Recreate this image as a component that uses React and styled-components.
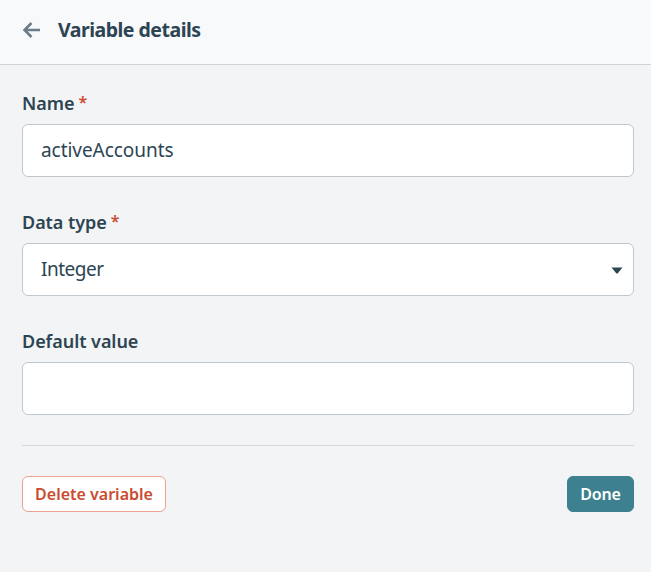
import styled, { createGlobalStyle } from 'styled-components';

const GlobalStyle = createGlobalStyle`
  html, body {
    margin: 0;
    padding: 0;
    background: #f3f4f6;
  }
  * {
    box-sizing: border-box;
  }
`;

const Page = styled.div`
  width: 651px;
  height: 572px;
  overflow: hidden;
  background: #f3f4f6;
  color: #2d4452;
  font-family: "Noto Sans", "Open Sans", sans-serif;
`;

const Header = styled.header`
  height: 65px;
  display: flex;
  align-items: center;
  gap: 17px;
  padding: 0 22px 5px;
  background: #f8f9fb;
  border-bottom: 1px solid #d0d3d7;
`;

const BackButton = styled.button`
  display: flex;
  padding: 0;
  border: 0;
  background: none;
  color: #6b7c89;
  cursor: pointer;
`;

const Title = styled.h1`
  margin: 0;
  font-size: 19.5px;
  line-height: 24px;
  font-weight: 700;
  letter-spacing: -0.5px;
`;

const Form = styled.form`
  padding: 25px 17px 0 22px;
`;

const Field = styled.div`
  margin-bottom: 32px;
`;

const Label = styled.label`
  display: block;
  height: 34px;
  font-size: 18px;
  line-height: 26px;
  font-weight: 600;
  letter-spacing: -0.05px;
`;

const Required = styled.span`
  position: relative;
  top: -2px;
  margin-left: 4px;
  color: #cb4b30;
  font-size: 16px;
`;

const InputWrap = styled.div`
  position: relative;
`;

const Input = styled.input`
  display: block;
  width: 100%;
  height: 53px;
  padding: 0 18px 2px;
  background: #fff;
  border: 1px solid #c0c7cd;
  border-radius: 6px;
  color: #2d4452;
  font-family: inherit;
  font-size: 19px;
  letter-spacing: ${(p) => (p.$tight ? '-0.5px' : '-0.05px')};
  outline: none;
`;

const Caret = styled.svg`
  position: absolute;
  top: 24px;
  right: 11px;
  width: 12px;
  height: 7px;
  color: #2d4452;
`;

const Divider = styled.hr`
  margin: -2px 0 30px;
  border: 0;
  border-top: 1px solid #d4d6d9;
`;

const Actions = styled.div`
  display: flex;
  justify-content: space-between;
`;

const Button = styled.button`
  height: 36px;
  width: ${(p) => (p.$danger ? '144px' : '67px')};
  padding: 0;
  border: 1px solid ${(p) => (p.$danger ? '#e9a393' : '#3d808f')};
  border-radius: 6px;
  background: ${(p) => (p.$danger ? '#fff' : '#3d808f')};
  color: ${(p) => (p.$danger ? '#cb4b30' : '#fff')};
  font-family: inherit;
  font-size: 16px;
  font-weight: 600;
  letter-spacing: ${(p) => (p.$danger ? '0' : '-0.2px')};
  cursor: pointer;
`;

export default function App() {
  return (
    <Page>
      <GlobalStyle />
      <Header>
        <BackButton type="button" aria-label="Back">
          <svg width="19" height="18" viewBox="0 0 19 18" fill="none" stroke="currentColor" strokeWidth="2.5">
            <path d="M18 9H3M9.5 2 2.5 9l7 7" />
          </svg>
        </BackButton>
        <Title>Variable details</Title>
      </Header>
      <Form>
        <Field>
          <Label>Name<Required>*</Required></Label>
          <Input defaultValue="activeAccounts" />
        </Field>
        <Field>
          <Label>Data type<Required>*</Required></Label>
          <InputWrap>
            <Input $tight defaultValue="Integer" readOnly />
            <Caret viewBox="0 0 12 7">
              <path d="M0.5 0.5h11L7 6a1.3 1.3 0 0 1-2 0z" fill="currentColor" />
            </Caret>
          </InputWrap>
        </Field>
        <Field>
          <Label>Default value</Label>
          <Input />
        </Field>
        <Divider />
        <Actions>
          <Button type="button" $danger>Delete variable</Button>
          <Button type="button">Done</Button>
        </Actions>
      </Form>
    </Page>
  );
}
